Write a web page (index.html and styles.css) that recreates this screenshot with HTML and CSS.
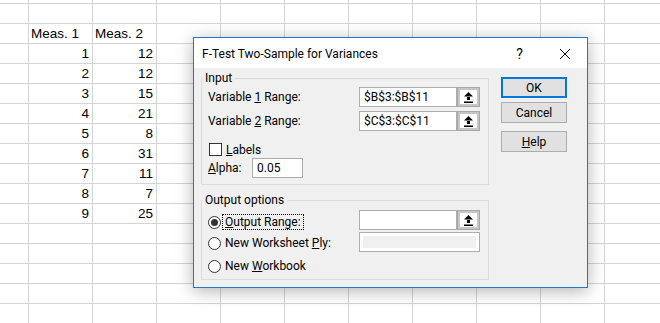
FILE: index.html
```html
<!DOCTYPE html>
<html lang="en">
<head>
    <meta charset="UTF-8">
    <title>F-Test Two-Sample for Variances</title>
    <link rel="stylesheet" href="styles.css">
</head>
<body>
    <div class="sheet">
        <!-- Worksheet data -->
        <div class="data">
            <div class="cell text">Meas. 1</div><div class="cell text">Meas. 2</div>
            <div class="cell">1</div><div class="cell">12</div>
            <div class="cell">2</div><div class="cell">12</div>
            <div class="cell">3</div><div class="cell">15</div>
            <div class="cell">4</div><div class="cell">21</div>
            <div class="cell">5</div><div class="cell">8</div>
            <div class="cell">6</div><div class="cell">31</div>
            <div class="cell">7</div><div class="cell">11</div>
            <div class="cell">8</div><div class="cell">7</div>
            <div class="cell">9</div><div class="cell">25</div>
        </div>

        <!-- Dialog -->
        <div class="dialog">
            <div class="titlebar">
                <span class="title">F-Test Two-Sample for Variances</span>
                <span class="tb-btn">?</span>
                <span class="tb-btn">
                    <svg width="10" height="10" viewBox="0 0 10 10"><path d="M0 0L10 10M10 0L0 10" stroke="#000" stroke-width="1"/></svg>
                </span>
            </div>
            <div class="body">
                <div class="groups">
                    <fieldset class="group">
                        <legend>Input</legend>
                        <div class="group-body">
                            <div class="row first">
                                <span class="label">Variable <u>1</u> Range:</span>
                                <div class="ref">
                                    <span class="field">$B$3:$B$11</span>
                                    <span class="pick"><svg width="9" height="11" viewBox="0 0 9 11"><path d="M4.5 0L0 4.5H9Z M3 4H6V8H3Z M0 9.5H9V11H0Z" fill="#000"/></svg></span>
                                </div>
                            </div>
                            <div class="row">
                                <span class="label">Variable <u>2</u> Range:</span>
                                <div class="ref">
                                    <span class="field">$C$3:$C$11</span>
                                    <span class="pick"><svg width="9" height="11" viewBox="0 0 9 11"><path d="M4.5 0L0 4.5H9Z M3 4H6V8H3Z M0 9.5H9V11H0Z" fill="#000"/></svg></span>
                                </div>
                            </div>
                            <div class="check-row">
                                <span class="checkbox"></span>
                                <span><u>L</u>abels</span>
                            </div>
                            <div class="alpha-row">
                                <span class="alpha-label"><u>A</u>lpha:</span>
                                <span class="field alpha">0.05</span>
                            </div>
                        </div>
                    </fieldset>

                    <fieldset class="group output">
                        <legend>Output options</legend>
                        <div class="out-body">
                            <div class="radios">
                                <div class="radio-row first">
                                    <span class="radio on"></span>
                                    <span class="radio-label focus"><u>O</u>utput Range:</span>
                                </div>
                                <div class="radio-row second">
                                    <span class="radio"></span>
                                    <span class="radio-label">New Worksheet <u>P</u>ly:</span>
                                </div>
                                <div class="radio-row third">
                                    <span class="radio"></span>
                                    <span class="radio-label">New <u>W</u>orkbook</span>
                                </div>
                            </div>
                            <div class="out-fields">
                                <div class="ref">
                                    <span class="field"></span>
                                    <span class="pick"><svg width="9" height="11" viewBox="0 0 9 11"><path d="M4.5 0L0 4.5H9Z M3 4H6V8H3Z M0 9.5H9V11H0Z" fill="#000"/></svg></span>
                                </div>
                                <div class="field disabled"></div>
                            </div>
                        </div>
                    </fieldset>
                </div>

                <div class="buttons">
                    <button type="button" class="btn default">OK</button>
                    <button type="button" class="btn cancel">Cancel</button>
                    <button type="button" class="btn help"><u>H</u>elp</button>
                </div>
            </div>
        </div>
    </div>
</body>
</html>
```

FILE: styles.css
```css
body {
    margin: 0;
    background-color: #fff;
}
.sheet {
    position: relative;
    width: 660px;
    height: 323px;
    overflow: hidden;
    background-color: #fff;
    background-image:
        linear-gradient(to right, #d4d4d4 1px, transparent 1px),
        linear-gradient(to bottom, #d4d4d4 1px, transparent 1px);
    background-size: 64px 20px;
    background-position: 28px 3px;
}
.data {
    display: grid;
    grid-template-columns: 64px 64px;
    grid-auto-rows: 20px;
    margin-left: 29px;
    padding-top: 24px;
    font-family: "Liberation Sans", Arial, sans-serif;
    font-size: 13.5px;
    color: #000;
}
.cell {
    padding: 0 4px 0 2px;
    line-height: 20px;
    text-align: right;
}
.cell.text {
    text-align: left;
}

/* dialog */
.dialog {
    position: absolute;
    left: 193px;
    top: 37px;
    width: 393px;
    height: 249px;
    border: 1px solid #1979ca;
    background-color: #f0f0f0;
    box-shadow: 0 3px 16px rgba(0, 0, 0, 0.3);
    font-family: Roboto, "Liberation Sans", sans-serif;
    font-size: 12px;
    color: #000;
}
.titlebar {
    display: flex;
    align-items: center;
    height: 30px;
    padding: 2px 0 0 8px;
    box-sizing: border-box;
    background-color: #fff;
}
.title {
    flex: 1;
}
.tb-btn {
    display: flex;
    align-items: center;
    justify-content: center;
    width: 45px;
    font-size: 14px;
}
.body {
    display: flex;
    gap: 12px;
    padding: 2px 0 0 7px;
}
.groups {
    width: 288px;
}
.group {
    margin: 0;
    padding: 0;
    border: 1px solid #dcdcdc;
}
.group legend {
    padding: 0 3px;
    line-height: 16px;
}
.group-body {
    padding: 0 8px 6px 6px;
}
.row {
    display: flex;
    align-items: center;
    height: 20px;
    margin-top: 4px;
}
.row.first {
    margin-top: 1px;
}
.label {
    width: 151px;
}
.ref {
    display: flex;
    width: 121px;
    height: 20px;
}
.field {
    display: flex;
    align-items: center;
    flex: 1;
    padding-left: 4px;
    border: 1px solid #adadad;
    background-color: #fff;
    box-sizing: border-box;
}
.pick {
    display: flex;
    align-items: center;
    justify-content: center;
    width: 23px;
    border: 1px solid #a8a8a8;
    box-shadow: inset 0 0 0 2px #c6c6c6;
    background-color: #fff;
    box-sizing: border-box;
}
.check-row {
    display: flex;
    align-items: center;
    gap: 4px;
    height: 13px;
    margin-top: 12px;
    padding-left: 1px;
}
.checkbox {
    width: 13px;
    height: 13px;
    border: 1px solid #333;
    background-color: #fff;
    box-sizing: border-box;
}
.alpha-row {
    display: flex;
    align-items: center;
    height: 20px;
    margin-top: 2px;
}
.alpha-label {
    width: 44px;
}
.field.alpha {
    flex: none;
    width: 51px;
    height: 20px;
}
.group.output {
    margin-top: 7px;
}
.out-body {
    display: flex;
    padding: 0 8px 5px 6px;
}
.radios {
    width: 151px;
}
.radio-row {
    display: flex;
    align-items: center;
    height: 16px;
}
.radio-row.first {
    margin-top: 6px;
}
.radio-row.second {
    margin-top: 5px;
}
.radio-row.third {
    margin-top: 7px;
}
.radio {
    position: relative;
    width: 13px;
    height: 13px;
    margin-right: 2px;
    border: 1px solid #333;
    border-radius: 50%;
    background-color: #fff;
    box-sizing: border-box;
}
.radio.on::after {
    content: "";
    position: absolute;
    left: 2px;
    top: 2px;
    width: 7px;
    height: 7px;
    border-radius: 50%;
    background-color: #333;
}
.radio-label {
    padding: 0 2px;
    line-height: 14px;
}
.radio-label.focus {
    outline: 1px dotted #000;
}
.out-fields {
    display: flex;
    flex-direction: column;
    gap: 2px;
    padding-top: 2px;
}
.field.disabled {
    flex: none;
    width: 121px;
    height: 20px;
    background-color: #f0f0f0;
    box-shadow: inset 0 0 0 3px #fff;
}
.buttons {
    display: flex;
    flex-direction: column;
    width: 66px;
    padding-top: 7px;
}
.btn {
    height: 21px;
    padding: 0;
    border: 1px solid #adadad;
    background-color: #e1e1e1;
    font-family: inherit;
    font-size: 12px;
    color: #000;
}
.btn.default {
    border: 2px solid #0078d7;
}
.btn.cancel {
    margin-top: 4px;
}
.btn.help {
    margin-top: 8px;
}
```
